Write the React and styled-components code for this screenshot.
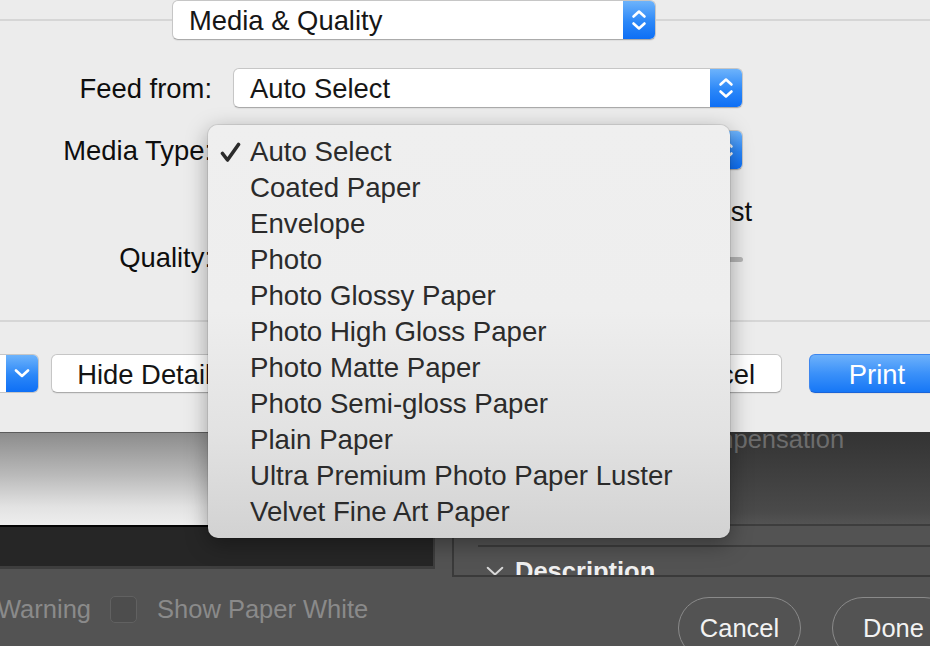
import React from 'react';
import styled, { createGlobalStyle } from 'styled-components';

const GlobalStyle = createGlobalStyle`
  html, body { margin: 0; padding: 0; }
  body {
    width: 930px; height: 646px; overflow: hidden; background: #535353;
    font-family: "Liberation Sans", Arial, sans-serif;
  }
`;

const Screen = styled.div`
  position: relative;
  width: 930px;
  height: 646px;
  overflow: hidden;
  display: flex;
  flex-direction: column;
`;

/* ---------- light print dialog ---------- */
const Dialog = styled.div`
  flex: none;
  height: 432px;
  background: #ececec;
  display: flex;
  flex-direction: column;
  overflow: hidden;
  font-size: 27.4px;
  color: #111;
`;

const TopBar = styled.div`
  display: flex;
  align-items: center;
  height: 40px;
  flex: none;
`;

const SepLine = styled.div`
  height: 2px;
  background: #d6d6d6;
  width: ${p => (p.$w ? `${p.$w}px` : 'auto')};
  flex: ${p => (p.$w ? 'none' : '1')};
`;

const Popup = styled.div`
  display: flex;
  box-sizing: border-box;
  width: ${p => p.$w}px;
  height: 40px;
  background: #fff;
  border: 1px solid #c6c6c6;
  border-bottom-color: #ababab;
  border-radius: 6px;
  box-shadow: 0 1px 1px rgba(0, 0, 0, 0.06);
  overflow: hidden;
  flex: none;
`;

const PopupText = styled.div`
  flex: 1;
  display: flex;
  align-items: center;
  padding-left: 16px;
  padding-top: 2px;
  white-space: nowrap;
  color: #161616;
`;

const Stepper = styled.div`
  width: 32px;
  flex: none;
  display: flex;
  align-items: center;
  justify-content: center;
  background: linear-gradient(#6db3fb, #2b87f8 55%, #0e6ff5);
`;

const Form = styled.div`
  display: flex;
  flex-direction: column;
`;

const FormRow = styled.div`
  display: grid;
  grid-template-columns: 212px 510px;
  column-gap: 21px;
  align-items: center;
  height: ${p => p.$h}px;
  margin-top: ${p => p.$mt}px;
  flex: none;
`;

const Label = styled.div`
  text-align: right;
  white-space: nowrap;
  color: #0e0e0e;
  padding-top: 2px;
`;

const RangeLabel = styled.div`
  grid-column: 2;
  justify-self: end;
  margin-right: -9px;
  color: #111;
`;

const SliderTrack = styled.div`
  height: 5px;
  border-radius: 3px;
  background: #b4b4b4;
  margin-top: 4px;
`;

const Separator = styled.div`
  height: 2px;
  background: #d6d6d6;
  margin-top: 43px;
  flex: none;
`;

const ButtonRow = styled.div`
  display: flex;
  align-items: center;
  height: 39px;
  margin-top: 32px;
  flex: none;
`;

const Group = styled.div`
  display: flex;
  align-items: center;
  gap: ${p => p.$gap}px;
  margin-left: ${p => (p.$right ? 'auto' : '0')};
  margin-right: ${p => (p.$right ? '-15px' : '0')};
`;

const PdfStub = styled.div`
  display: flex;
  height: 39px;
  box-sizing: border-box;
  border: 1px solid #c6c6c6;
  border-left: none;
  border-radius: 0 6px 6px 0;
  overflow: hidden;
  background: #fff;
`;

const StubWhite = styled.div`
  width: 6px;
`;

const PushButton = styled.div`
  box-sizing: border-box;
  height: 39px;
  width: ${p => p.$w}px;
  display: flex;
  align-items: center;
  justify-content: center;
  padding-top: 2px;
  border-radius: 6px;
  white-space: nowrap;
  background: ${p => (p.$primary ? 'linear-gradient(#6db1fb, #3b91f9 50%, #1677f6)' : '#fff')};
  color: ${p => (p.$primary ? '#fff' : '#141414')};
  border: 1px solid ${p => (p.$primary ? '#3d86ee' : '#c6c6c6')};
  border-bottom-color: ${p => (p.$primary ? '#1a64d8' : '#ababab')};
  box-shadow: 0 1px 1px rgba(0, 0, 0, 0.06);
`;

/* ---------- dark Photoshop window behind ---------- */
const Dark = styled.div`
  flex: 1;
  display: flex;
  flex-direction: column;
  background: #535353;
  font-size: 25.5px;
  overflow: hidden;
`;

const PanelsRow = styled.div`
  display: flex;
  height: 145px;
  flex: none;
`;

const PreviewPanel = styled.div`
  width: 435px;
  height: 137px;
  box-sizing: border-box;
  background: #262626;
  border-right: 2px solid #3e3e3e;
  border-bottom: 3px solid #3e3e3e;
  flex: none;
`;

const Paper = styled.div`
  height: 95px;
  box-sizing: border-box;
  background: linear-gradient(#8c8c8c, #b9b9b9 45%, #e2e2e2 80%, #eeeeee);
  border-top: 1px solid #5c5c5c;
  border-bottom: 2px solid #050505;
`;

const SettingsPanel = styled.div`
  flex: 1;
  margin-left: 17px;
  height: 145px;
  box-sizing: border-box;
  border-left: 2px solid #3a3a3a;
  border-bottom: 2px solid #3a3a3a;
  overflow: hidden;
  display: flex;
  flex-direction: column;
  background: linear-gradient(#333333, #4a4a4a 80px, #535353 92px);
`;

const FadedOption = styled.div`
  margin-top: -8px;
  margin-left: 91px;
  height: 30px;
  line-height: 30px;
  color: #6c6c6c;
  white-space: nowrap;
  flex: none;
`;

const Divider = styled.div`
  height: 2px;
  background: #3d3d3d;
  margin-left: 24px;
  margin-top: ${p => p.$mt}px;
  flex: none;
`;

const SectionHeader = styled.div`
  display: flex;
  align-items: center;
  gap: 10px;
  margin-left: 31px;
  margin-top: 8px;
  height: 30px;
  line-height: 30px;
  font-weight: bold;
  color: #f0f0f0;
  flex: none;
  position: relative;
  top: 1px;
`;

const BottomRow = styled.div`
  flex: 1;
  display: flex;
  align-items: flex-start;
`;

const CheckRow = styled.div`
  display: flex;
  align-items: center;
  height: 30px;
  margin-top: 17px;
  margin-left: -3px;
  color: #8a8a8a;
  white-space: nowrap;
`;

const CheckBox = styled.div`
  width: 27px;
  height: 27px;
  box-sizing: border-box;
  border: 1.5px solid #616161;
  border-radius: 5px;
  background: #4d4d4d;
  margin-left: 19px;
  margin-right: 20px;
`;

const PillGroup = styled.div`
  display: flex;
  gap: 31px;
  margin-left: auto;
  margin-right: -25px;
  margin-top: 20px;
`;

const Pill = styled.div`
  width: 123px;
  height: 62px;
  box-sizing: border-box;
  border: 1.5px solid #8a8a8a;
  border-radius: 31px;
  display: flex;
  align-items: center;
  justify-content: center;
  color: #f2f2f2;
`;

/* ---------- open popup menu ---------- */
const Menu = styled.div`
  position: absolute;
  left: 208px;
  top: 125px;
  width: 522px;
  height: 413px;
  box-sizing: border-box;
  padding: 8px 0;
  border-radius: 10px;
  background: linear-gradient(#efefef, #eeeeee 45%, #e2e2e2 75%, #d2d2d2);
  box-shadow: 0 0 0 1px rgba(0, 0, 0, 0.08), 0 6px 22px rgba(0, 0, 0, 0.35);
  font-size: 27.65px;
  color: #2b2b2b;
`;

const MenuItem = styled.div`
  display: grid;
  grid-template-columns: 42px 1fr;
  align-items: center;
  height: 36px;
  white-space: nowrap;
`;

const ItemText = styled.span`
  padding-top: 2px;
`;

const CheckCell = styled.div`
  padding-left: 12px;
  padding-top: 2px;
  display: flex;
  align-items: center;
`;

const Chevrons = () => (
  <svg width="16" height="24" viewBox="0 0 16 24" fill="none" stroke="#fff" strokeWidth="2.6" strokeLinecap="round" strokeLinejoin="round">
    <polyline points="2.5,8.5 8,3.5 13.5,8.5" />
    <polyline points="2.5,15.5 8,20.5 13.5,15.5" />
  </svg>
);

const ChevronDown = ({ color = '#fff', w = 16, h = 9, sw = 2.6 }) => (
  <svg width={w} height={h} viewBox="0 0 16 9" fill="none" stroke={color} strokeWidth={sw} strokeLinecap="round" strokeLinejoin="round">
    <polyline points="2,1.5 8,7 14,1.5" />
  </svg>
);

const CheckMark = () => (
  <svg width="21" height="21" viewBox="0 0 21 21" fill="none" stroke="#2b2b2b" strokeWidth="3.6" strokeLinecap="round" strokeLinejoin="round">
    <polyline points="2.5,11.5 7.5,18 18.5,2.5" />
  </svg>
);

const mediaTypes = [
  'Auto Select',
  'Coated Paper',
  'Envelope',
  'Photo',
  'Photo Glossy Paper',
  'Photo High Gloss Paper',
  'Photo Matte Paper',
  'Photo Semi-gloss Paper',
  'Plain Paper',
  'Ultra Premium Photo Paper Luster',
  'Velvet Fine Art Paper',
];

export default function App() {
  return (
    <>
      <GlobalStyle />
      <Screen>
        <Dialog>
          <TopBar>
            <SepLine $w={172} />
            <Popup $w={484}>
              <PopupText>Media &amp; Quality</PopupText>
              <Stepper><Chevrons /></Stepper>
            </Popup>
            <SepLine />
          </TopBar>

          <Form>
            <FormRow $h={40} $mt={28}>
              <Label>Feed from:</Label>
              <Popup $w={510}>
                <PopupText>Auto Select</PopupText>
                <Stepper><Chevrons /></Stepper>
              </Popup>
            </FormRow>
            <FormRow $h={40} $mt={22}>
              <Label>Media Type:</Label>
              <Popup $w={510}>
                <PopupText>Auto Select</PopupText>
                <Stepper><Chevrons /></Stepper>
              </Popup>
            </FormRow>
            <FormRow $h={30} $mt={26}>
              <RangeLabel>Best</RangeLabel>
            </FormRow>
            <FormRow $h={40} $mt={11}>
              <Label>Quality:</Label>
              <SliderTrack />
            </FormRow>
          </Form>

          <Separator />

          <ButtonRow>
            <Group $gap={12}>
              <PdfStub>
                <StubWhite />
                <Stepper><ChevronDown /></Stepper>
              </PdfStub>
              <PushButton $w={200}>Hide Details</PushButton>
            </Group>
            <Group $gap={27} $right>
              <PushButton $w={139}>Cancel</PushButton>
              <PushButton $w={136} $primary>Print</PushButton>
            </Group>
          </ButtonRow>
        </Dialog>

        <Dark>
          <PanelsRow>
            <PreviewPanel>
              <Paper />
            </PreviewPanel>
            <SettingsPanel>
              <FadedOption>Black Point Compensation</FadedOption>
              <Divider $mt={70} />
              <Divider $mt={19} />
              <SectionHeader>
                <ChevronDown color="#d8d8d8" w={20} h={11} sw={1.6} />
                Description
              </SectionHeader>
            </SettingsPanel>
          </PanelsRow>
          <BottomRow>
            <CheckRow>
              Warning
              <CheckBox />
              Show Paper White
            </CheckRow>
            <PillGroup>
              <Pill>Cancel</Pill>
              <Pill>Done</Pill>
            </PillGroup>
          </BottomRow>
        </Dark>

        <Menu>
          {mediaTypes.map((t, i) => (
            <MenuItem key={t}>
              <CheckCell>{i === 0 && <CheckMark />}</CheckCell>
              <ItemText>{t}</ItemText>
            </MenuItem>
          ))}
        </Menu>
      </Screen>
    </>
  );
}
